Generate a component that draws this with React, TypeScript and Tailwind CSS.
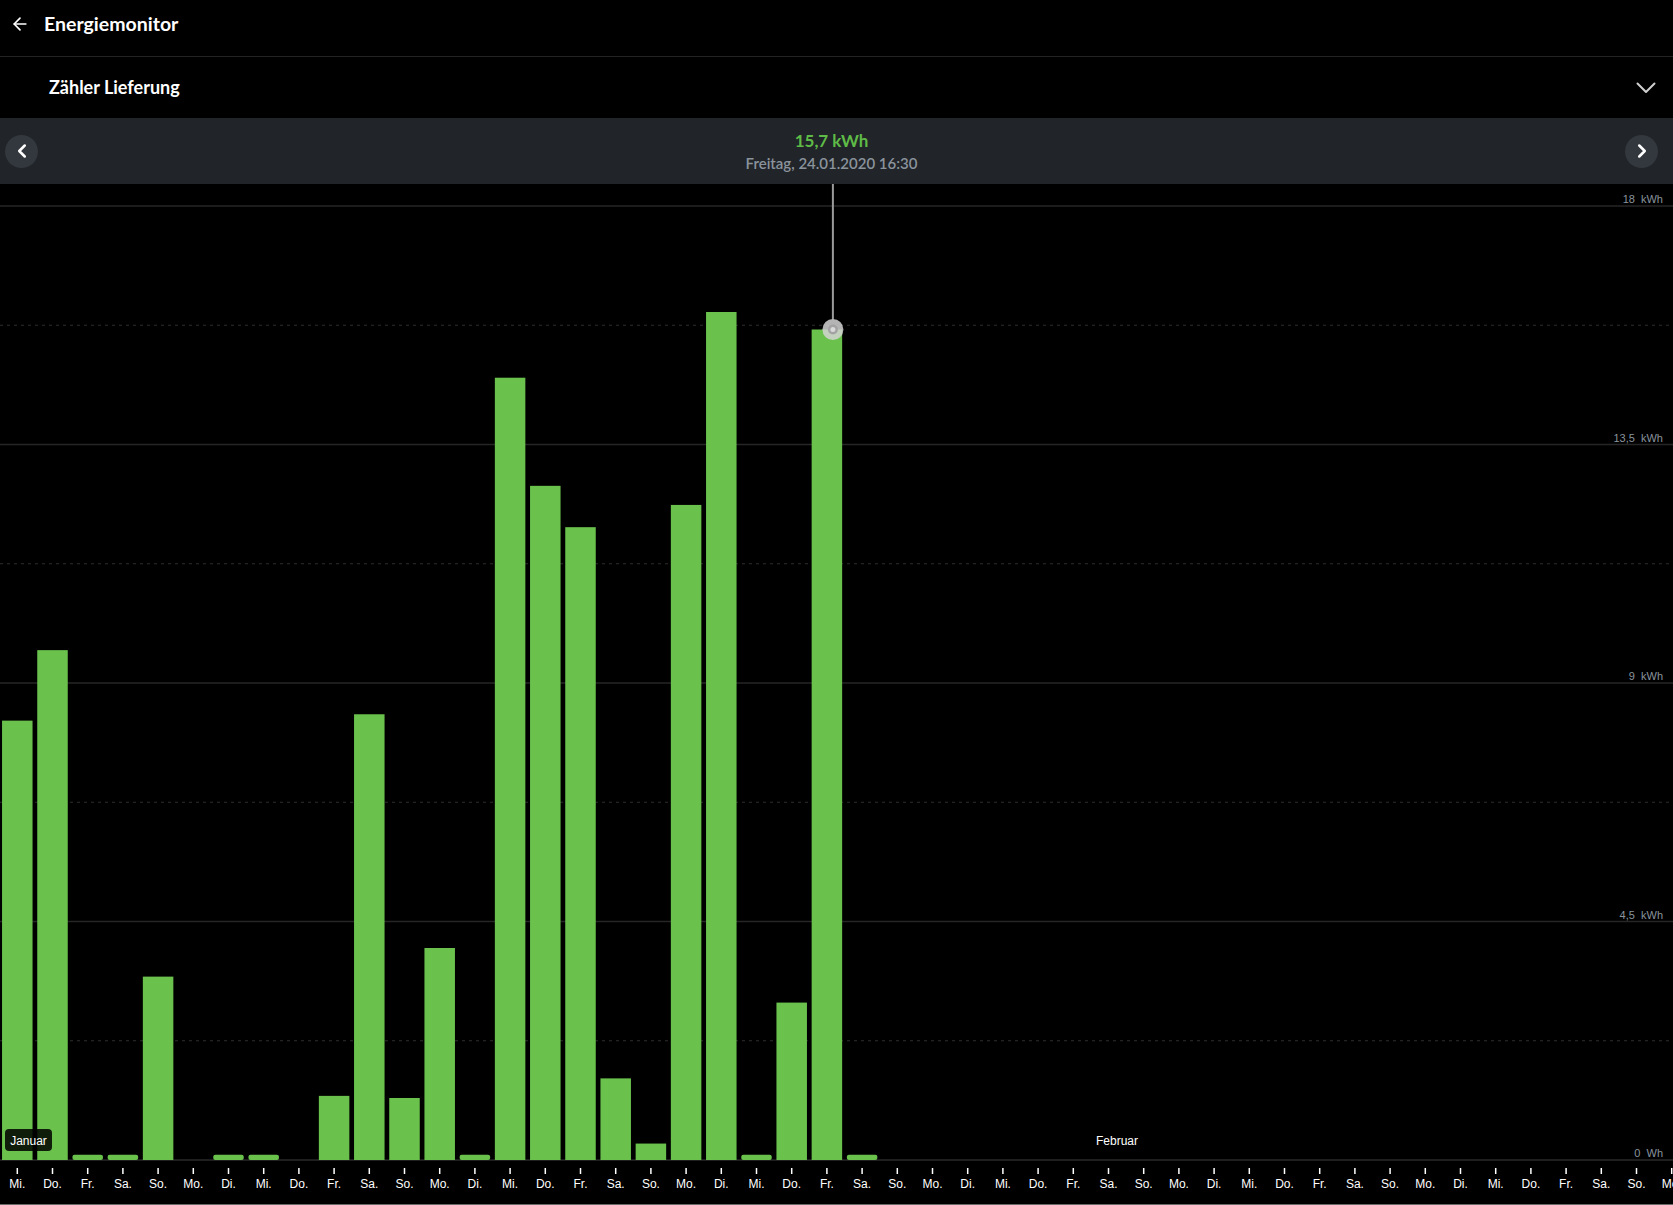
import { ArrowLeft, ChevronLeft, ChevronRight } from 'lucide-react';

const DAYS = ['Mi.', 'Do.', 'Fr.', 'Sa.', 'So.', 'Mo.', 'Di.'];

// kWh per day, January 2020 starting Wed 1st
const VALUES = [
  8.29, 9.62, 0.1, 0.1, 3.46, 0, 0.1, 0.1, 0, 1.21, 8.41, 1.17, 4.0, 0.1, 14.76, 12.72, 11.94, 1.54,
  0.31, 12.36, 16.0, 0.1, 2.97, 15.67, 0.1,
];

const W = 1673;
const H = 1020;
const BASE = 976;
const TOP = 22;
const PER = (BASE - TOP) / 18;
const PITCH = 35.2;
const X0 = 17.3;
const BAR_W = 30.5;
const SELECTED = 23;

const GRID = [
  { v: 18, label: '18  kWh' },
  { v: 13.5, label: '13,5  kWh' },
  { v: 9, label: '9  kWh' },
  { v: 4.5, label: '4,5  kWh' },
  { v: 0, label: '0  Wh' },
];

function Chart() {
  const ticks = Array.from({ length: 48 }, (_, i) => i);
  // the marker sits a bit right of the bar centre (16:30 of the day)
  const selX = X0 + SELECTED * PITCH + 6;
  const selY = BASE - VALUES[SELECTED] * PER;

  return (
    <svg width={W} height={H} viewBox={`0 0 ${W} ${H}`} className="block">
      {/* grid */}
      {[2.25, 6.75, 11.25, 15.75].map((v) => (
        <line
          key={v}
          x1={0}
          x2={W}
          y1={BASE - v * PER}
          y2={BASE - v * PER}
          stroke="#2e2e2e"
          strokeWidth={1}
          strokeDasharray="3 4"
        />
      ))}
      {GRID.map((g) => (
        <line
          key={g.v}
          x1={0}
          x2={W}
          y1={BASE - g.v * PER}
          y2={BASE - g.v * PER}
          stroke={g.v === 0 ? '#1e1e1e' : '#262626'}
          strokeWidth={g.v === 0 ? 2 : 1.5}
        />
      ))}

      {/* bars */}
      {VALUES.map((v, i) => {
        if (v <= 0) return null;
        const h = v * PER;
        return (
          <rect
            key={i}
            x={X0 + i * PITCH - BAR_W / 2}
            y={BASE - h}
            width={BAR_W}
            height={h}
            rx={h < 10 ? 2 : 0}
            fill="#6ac24d"
          />
        );
      })}

      {/* y labels */}
      {GRID.map((g) => (
        <text
          key={g.v}
          x={1663}
          y={BASE - g.v * PER - 3}
          textAnchor="end"
          fontSize={11}
          fill="#8a949e"
          style={{ whiteSpace: 'pre', fontFamily: '"Liberation Sans", Arial, sans-serif' }}
        >
          {g.label}
        </text>
      ))}

      {/* month labels */}
      <rect x={5} y={945} width={47} height={22} rx={4} fill="#000" fillOpacity={0.85} />
      <text
        x={28.5}
        y={961}
        textAnchor="middle"
        fontSize={12}
        fill="#fff"
        style={{ fontFamily: '"Liberation Sans", Arial, sans-serif' }}
      >
        Januar
      </text>
      <text
        x={1117}
        y={961}
        textAnchor="middle"
        fontSize={12}
        fill="#fff"
        style={{ fontFamily: '"Liberation Sans", Arial, sans-serif' }}
      >
        Februar
      </text>

      {/* x axis */}
      {ticks.map((i) => {
        const x = X0 + i * PITCH;
        return (
          <g key={i}>
            <line x1={x} x2={x} y1={984} y2={990} stroke="#fff" strokeWidth={1.5} />
            <text
              x={x}
              y={1004}
              textAnchor="middle"
              fontSize={12}
              fill="#fff"
              style={{ fontFamily: '"Liberation Sans", Arial, sans-serif' }}
            >
              {DAYS[i % 7]}
            </text>
          </g>
        );
      })}

      {/* selection */}
      <line x1={selX} x2={selX} y1={0} y2={selY - 10} stroke="#9a9a9a" strokeWidth={2} />
      <circle cx={selX} cy={selY} r={10.5} fill="#d4d4d4" fillOpacity={0.85} />
      <circle cx={selX} cy={selY} r={5} fill="#a3a3a3" />
      <circle cx={selX} cy={selY} r={2.5} fill="#d9d9d9" />
    </svg>
  );
}

export default function App() {
  return (
    <div className="w-[1673px] h-[1205px] bg-black text-white overflow-hidden flex flex-col font-['Lato','Noto_Sans',sans-serif]">
      <header className="h-[57px] border-b border-[#232323] flex items-center pl-[10px] pb-[8px] gap-[14px] shrink-0">
        <ArrowLeft size={20} strokeWidth={2} className="text-white" />
        <h1 className="text-[19.5px] font-bold leading-none">Energiemonitor</h1>
      </header>

      <div className="h-[61px] flex items-center justify-between pl-[49px] pr-[16px] shrink-0">
        <span className="text-[18px] font-bold">Zähler Lieferung</span>
        <svg width="20" height="12" viewBox="0 0 20 12" className="mr-[1px]">
          <path d="M1.5 1.5 L10 10 L18.5 1.5" fill="none" stroke="#cfcfcf" strokeWidth="2" strokeLinecap="round" strokeLinejoin="round" />
        </svg>
      </div>

      <div className="h-[66px] bg-[#212428] flex items-center justify-between px-[5px] shrink-0">
        <button className="w-[33px] h-[33px] rounded-full bg-[#33383e] flex items-center justify-center">
          <ChevronLeft size={22} strokeWidth={2.75} className="text-white" />
        </button>
        <div className="flex flex-col items-center leading-tight">
          <span className="text-[17px] font-bold text-[#5fbb47]">15,7 kWh</span>
          <span className="text-[15px] font-semibold text-[#8a939c] mt-[3px]">Freitag, 24.01.2020 16:30</span>
        </div>
        <button className="w-[33px] h-[33px] rounded-full bg-[#33383e] flex items-center justify-center mr-[10px]">
          <ChevronRight size={22} strokeWidth={2.75} className="text-white" />
        </button>
      </div>

      <div className="flex-1 flex flex-col">
        <Chart />
        <div className="h-px bg-[#6b6b6b]" />
      </div>
    </div>
  );
}
